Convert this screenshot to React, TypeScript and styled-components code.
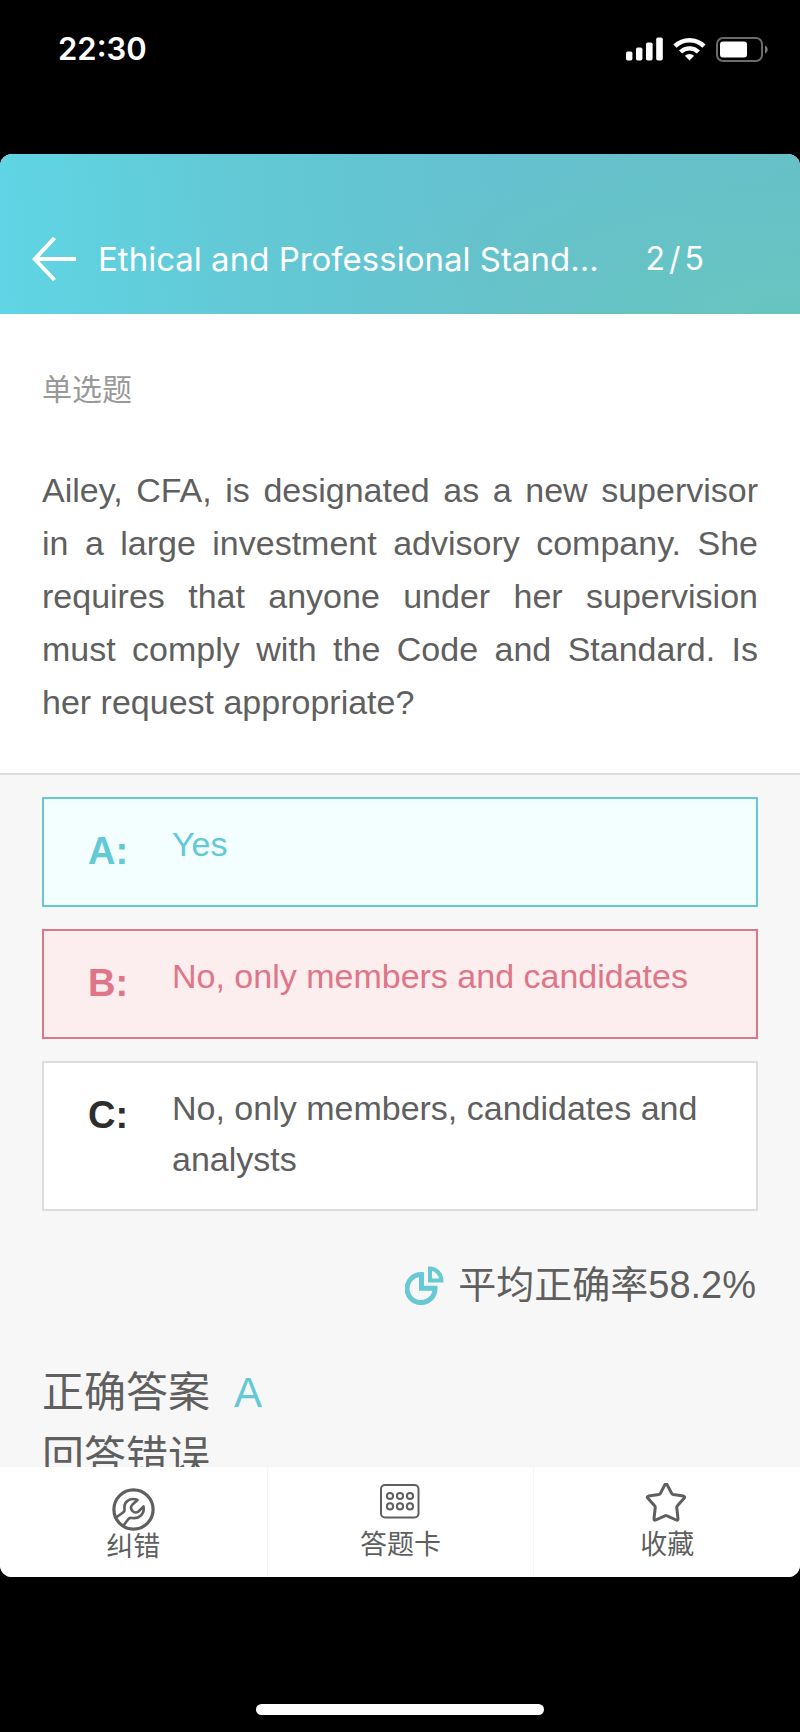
import React, { useState } from "react";
import styled, { createGlobalStyle } from "styled-components";

const sans = `"Liberation Sans", "Noto Sans CJK SC", sans-serif`;
const ui = `Inter, "Noto Sans CJK SC", sans-serif`;

const GlobalStyle = createGlobalStyle`
  * { box-sizing: border-box; }
  body { margin: 0; background: #000; font-family: ${sans}; color: #5f5f5f; }
  button { font: inherit; color: inherit; border: 0; padding: 0; background: none; cursor: pointer; }
  h1, h2, p { margin: 0; font-weight: 400; }
  svg { display: block; flex: none; }
`;

const Screen = styled.div`
  display: flex;
  flex-direction: column;
  height: 100vh;
  background: #000;
`;

const StatusBar = styled.div`
  display: flex;
  align-items: center;
  justify-content: space-between;
  flex: none;
  height: 154px;
  padding: 0 32px 56px 58px;
  color: #fff;
  font: 600 31px/40px ${ui};
`;

const StatusIcons = styled.div`
  display: flex;
  align-items: center;
  gap: 10px;
`;

const AppCard = styled.div`
  display: flex;
  flex-direction: column;
  flex: 1;
  min-height: 0;
  border-radius: 12px;
  overflow: hidden;
  background: #fff;
`;

const Header = styled.header`
  display: flex;
  align-items: center;
  flex: none;
  height: 160px;
  padding: 50px 96px 0 32px;
  color: #fff;
  background:
    radial-gradient(ellipse 60% 110% at 100% 100%, #67c5c0 0%, rgba(103, 197, 192, 0) 100%),
    linear-gradient(86deg, #60d5e5 0%, #62c9d5 30%, #65c1cf 62%, #66c0c9 100%);
  font: 400 32px/40px ${ui};
`;

const Title = styled.h1`
  flex: 1;
  min-width: 0;
  margin: 0 40px 0 22px;
  font-size: 33px;
  white-space: nowrap;
  overflow: hidden;
  text-overflow: ellipsis;
`;

const Progress = styled.div`
  display: flex;
  gap: 4px;
`;

const Content = styled.main`
  flex: 1;
  min-height: 0;
  overflow-y: auto;
  scrollbar-width: none;
  background: #f7f7f7;
`;

const Question = styled.section`
  padding: 56px 42px 44px;
  background: #fff;
  border-bottom: 2px solid #dcdcdc;
`;

const Kind = styled.h2`
  margin-bottom: 54px;
  font-size: 30px;
  line-height: 40px;
  color: #999;
`;

const Prompt = styled.p`
  font-size: 34px;
  line-height: 53px;
  text-align: justify;
`;

const Options = styled.div`
  display: flex;
  flex-direction: column;
  gap: 22px;
  padding: 22px 42px 0;
`;

type Tone = "right" | "wrong" | "plain";
const tones = {
  right: { line: "#65c7d1", fill: "#f3feff", key: "#62c9d5", text: "#62c9d5" },
  wrong: { line: "#dc7688", fill: "#fcedee", key: "#de7688", text: "#de7688" },
  plain: { line: "#dcdcdc", fill: "#fff", key: "#2d2d2d", text: "#5f5f5f" },
};

const Option = styled.button<{ $tone: Tone }>`
  display: flex;
  align-items: flex-start;
  min-height: 110px;
  padding: 20px 44px 24px;
  text-align: left;
  border: 2px solid ${(p) => tones[p.$tone].line};
  background: ${(p) => tones[p.$tone].fill};
  color: ${(p) => tones[p.$tone].text};
  font-size: 34px;
  line-height: 51px;
`;

const OptionKey = styled.span<{ $tone: Tone }>`
  flex: none;
  width: 84px;
  padding-top: 7px;
  font-size: 38px;
  font-weight: 700;
  color: ${(p) => tones[p.$tone].key};
`;

const Average = styled.div`
  display: flex;
  align-items: center;
  justify-content: flex-end;
  gap: 14px;
  padding: 44px 44px 0;
  font-size: 38px;
  line-height: 60px;
`;

const Result = styled.div`
  padding: 46px 42px 40px;
  font-size: 42px;
  line-height: 64px;
`;

const Answer = styled.span`
  margin-left: 24px;
  color: #62c9d5;
`;

const Nav = styled.nav`
  display: grid;
  grid-template-columns: repeat(3, 1fr);
  flex: none;
  height: 110px;
  background: #fff;
`;

const NavButton = styled.button`
  display: flex;
  flex-direction: column;
  align-items: center;
  padding-top: 16px;
  font-size: 27px;
  line-height: 28px;

  & + & {
    border-left: 1px solid #f5f5f5;
  }
`;

const HomeArea = styled.div`
  display: flex;
  justify-content: center;
  align-items: flex-end;
  flex: none;
  height: 155px;
  padding-bottom: 17px;
`;

const HomeBar = styled.div`
  width: 36%;
  height: 11px;
  border-radius: 6px;
  background: #fff;
`;

const Signal = () => (
  <svg width="37" height="24" viewBox="0 0 37 24" fill="#fff" aria-hidden="true">
    <rect x="0" y="14.5" width="6.4" height="9" rx="1.8" />
    <rect x="10" y="10.5" width="6.4" height="13" rx="1.8" />
    <rect x="20" y="5.5" width="6.6" height="18" rx="1.8" />
    <rect x="30.2" y="0.5" width="6.6" height="23" rx="1.8" />
  </svg>
);

const Wifi = () => (
  <svg width="33" height="24" viewBox="0 0 33 24" fill="none" stroke="#fff" aria-hidden="true">
    <path d="M2 9.2a20.6 20.6 0 0 1 29 0" strokeWidth="4.6" />
    <path d="M7.6 15a12.7 12.7 0 0 1 17.8 0" strokeWidth="4.4" />
    <path d="M16.5 23.5l-4.6-4.7a6.7 6.7 0 0 1 9.2 0z" fill="#fff" stroke="none" />
  </svg>
);

const Battery = () => (
  <svg width="52" height="25" viewBox="0 0 52 25" aria-hidden="true">
    <rect x="1" y="1" width="45" height="23" rx="6" fill="none" stroke="#6b6b6b" strokeWidth="2" />
    <rect x="4" y="4.5" width="27" height="16" rx="3" fill="#fff" />
    <path d="M49 8.5c3.6 1.6 3.6 6.4 0 8z" fill="#7a7a7a" />
  </svg>
);

const BackArrow = () => (
  <svg width="44" height="46" viewBox="0 0 44 46" fill="none" stroke="#fff" strokeWidth="4" aria-hidden="true">
    <path d="M22.5 2L2.8 23l19.7 21M3 23h41" />
  </svg>
);

const Pie = () => (
  <svg width="39" height="39" viewBox="0 0 39 39" fill="none" stroke="#66c9d3" aria-hidden="true">
    <path d="M16.5 8.600A14 14 0 1 0 30 22.200H16.500z" strokeWidth="5" />
    <path d="M25 2.6V14.4h11.4A12 12 0 0 0 25 2.6z" strokeWidth="4" />
  </svg>
);

const Wrench = () => (
  <svg width="50" height="50" viewBox="0 0 50 50" fill="none" stroke="#5f5f5f" strokeWidth="2.600" strokeLinejoin="round" aria-hidden="true">
    <circle cx="25.500" cy="26.500" r="19.600" strokeWidth="3.200" />
    <path d="M8 34.500L15 29.500Q17 28.500 16.500 25.500C15.500 19 22 14 29.500 17L24.500 21.500C20.500 26 26 31.500 30.500 28.500L35.500 23.500C37 31 31 36 24 35Q21.500 34.500 20 36.500L15.500 42.500" />
  </svg>
);

const AnswerCard = () => (
  <svg width="48" height="48" viewBox="0 0 48 48" fill="none" stroke="#5f5f5f" strokeWidth="2" aria-hidden="true">
    <rect x="5" y="2" width="37.500" height="32.500" rx="4" />
    {[14, 24, 34].map((x) =>
      [13, 23.4].map((y) => <circle key={`${x}-${y}`} cx={x} cy={y} r="3.100" />)
    )}
  </svg>
);

const Star = () => (
  <svg width="48" height="48" viewBox="0 0 48 48" fill="none" stroke="#5f5f5f" strokeWidth="3" strokeLinejoin="round" aria-hidden="true">
    <path d="M22 1.500q1-1.500 2 0l4.600 8.800q.5 1 1.600 1.200l10.300 1.600q2 .6.600 2.200l-6.700 7.500q-.8.8-.6 2l1.200 11q0 2-1.800 1.200l-9.100-4.200q-1.100-.6-2.200 0l-9.100 4.200q-1.800.8-1.800-1.200l1.200-11q.2-1.200-.6-2l-6.700-7.500q-1.400-1.600.6-2.200l10.300-1.600q1.100-.2 1.600-1.200z" />
  </svg>
);

const options: { id: string; text: string; tone: Tone }[] = [
  { id: "A", text: "Yes", tone: "right" },
  { id: "B", text: "No, only members and candidates", tone: "wrong" },
  { id: "C", text: "No, only members, candidates and analysts", tone: "plain" },
];

export default function App() {
  const [saved, setSaved] = useState(false);

  return (
    <Screen>
      <GlobalStyle />
      <StatusBar>
        <span>22:30</span>
        <StatusIcons>
          <Signal />
          <Wifi />
          <Battery />
        </StatusIcons>
      </StatusBar>
      <AppCard>
        <Header>
          <button type="button" aria-label="返回">
            <BackArrow />
          </button>
          <Title>Ethical and Professional Stand...</Title>
          <Progress>
            <span>2</span>
            <span>/</span>
            <span>5</span>
          </Progress>
        </Header>
        <Content>
          <Question>
            <Kind>单选题</Kind>
            <Prompt>
              Ailey, CFA, is designated as a new supervisor in a large investment advisory company. She
              requires that anyone under her supervision must comply with the Code and Standard. Is her
              request appropriate?
            </Prompt>
          </Question>
          <Options>
            {options.map((o) => (
              <Option key={o.id} type="button" $tone={o.tone}>
                <OptionKey $tone={o.tone}>{o.id}:</OptionKey>
                <span>{o.text}</span>
              </Option>
            ))}
          </Options>
          <Average>
            <Pie />
            <span>平均正确率58.2%</span>
          </Average>
          <Result>
            <p>
              正确答案<Answer>A</Answer>
            </p>
            <p>回答错误</p>
          </Result>
        </Content>
        <Nav>
          <NavButton type="button">
            <Wrench />
            纠错
          </NavButton>
          <NavButton type="button">
            <AnswerCard />
            答题卡
          </NavButton>
          <NavButton type="button" aria-pressed={saved} onClick={() => setSaved(!saved)}>
            <Star />
            收藏
          </NavButton>
        </Nav>
      </AppCard>
      <HomeArea>
        <HomeBar />
      </HomeArea>
    </Screen>
  );
}
